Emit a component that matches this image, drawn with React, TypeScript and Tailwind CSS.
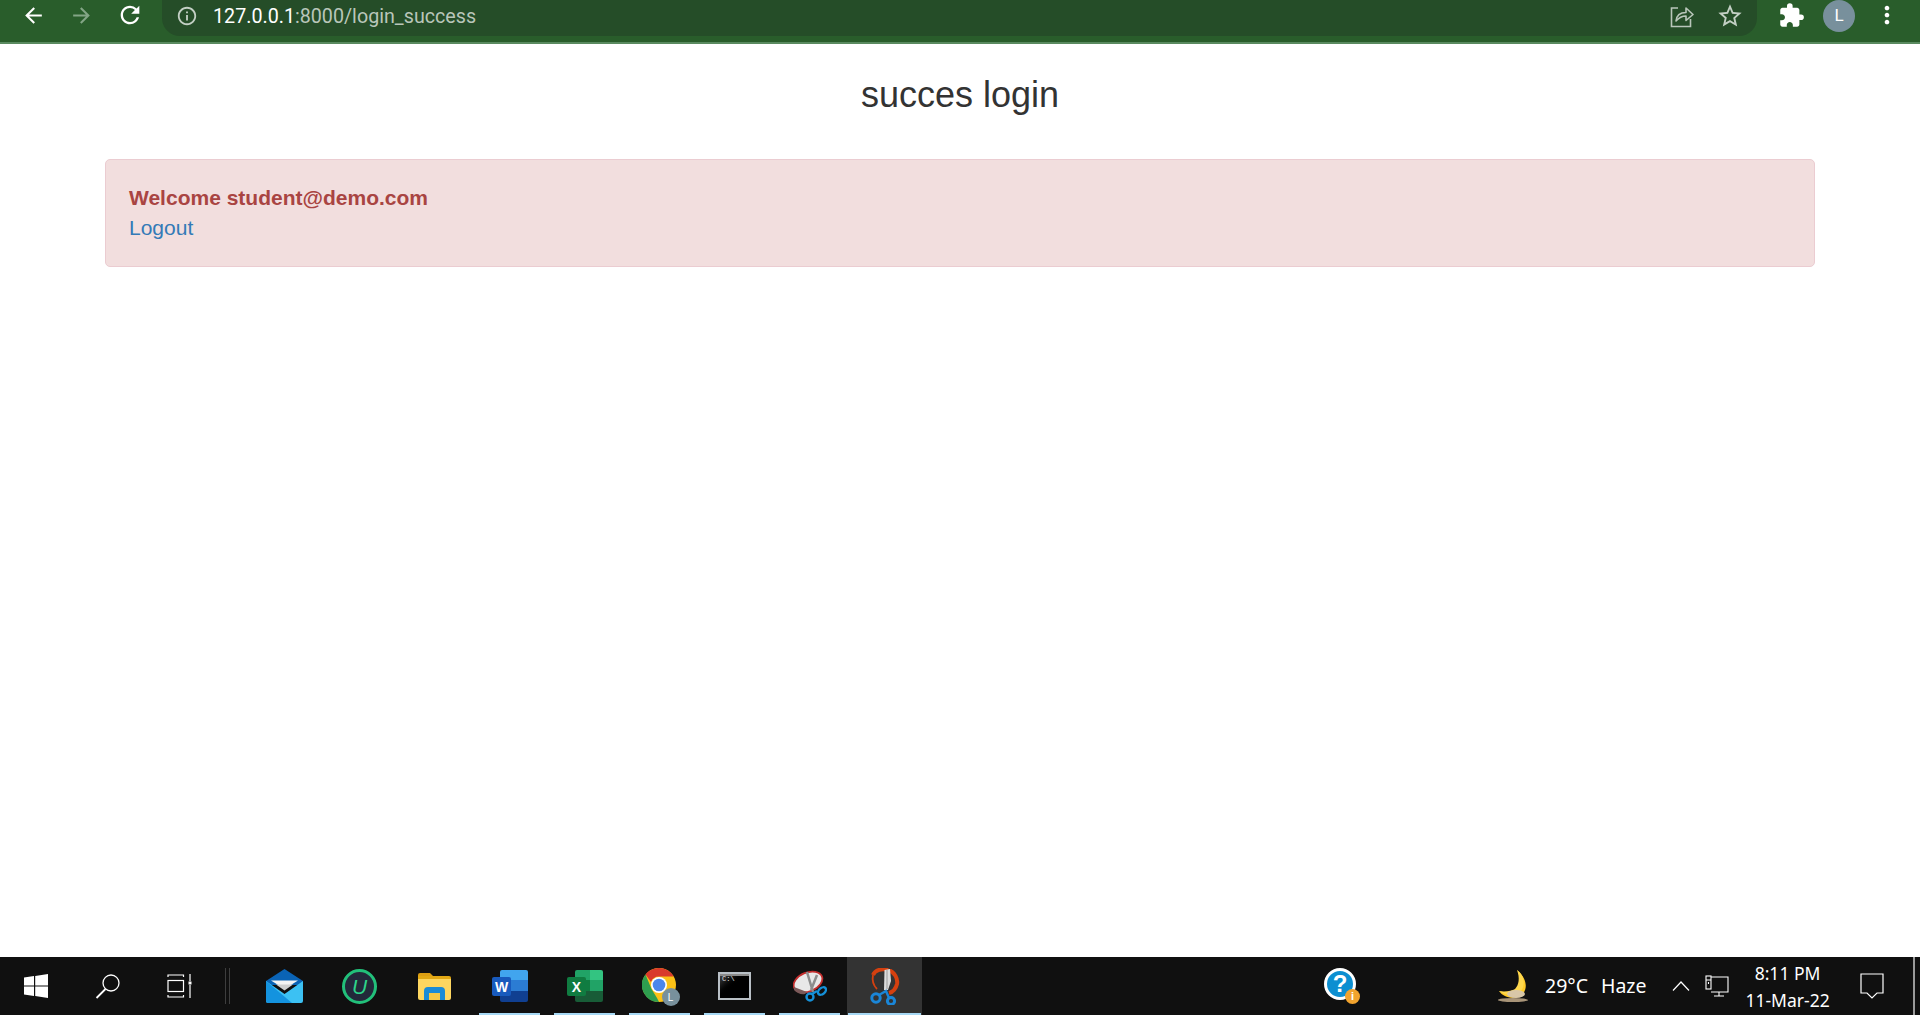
import { MdArrowBack, MdArrowForward, MdExtension, MdInfoOutline, MdMoreVert, MdRefresh, MdStarBorder } from 'react-icons/md'
import type { ReactNode } from 'react'

function ShareIcon() {
  return (
    <svg width="24" height="24" viewBox="0 0 24 24" fill="none" stroke="#b9c6ba" strokeWidth="1.6">
      <path d="M8 4H1.500v18.500h19V15" />
      <path d="M6 17c.5-5 4-8.500 10-8.500V4l7 6.500-7 6V12c-4 0-7 1.500-10 5z" strokeLinejoin="round" />
    </svg>
  )
}

function WindowsLogo() {
  return (
    <svg width="24" height="24" viewBox="0 0 24 24" fill="#fff">
      <path d="M0 3.500l10-1.400v9.300H0zM11.200 1.900L24 0v11.400H11.200zM0 12.600h10v9.300L0 20.500zM11.200 12.600H24V24l-12.800-1.900z" />
    </svg>
  )
}

function SearchIcon() {
  return (
    <svg width="26" height="26" viewBox="0 0 26 26" fill="none" stroke="#fff" strokeWidth="1.300">
      <circle cx="16" cy="10" r="8" />
      <path d="M10.500 16L1.500 25" strokeWidth="1.800" />
    </svg>
  )
}

function TaskViewIcon() {
  return (
    <svg width="26" height="24" viewBox="0 0 26 24" fill="none" stroke="#fff" strokeWidth="1.200">
      <path d="M1 3V1h15.500v2M1 21v2h15.500v-2" />
      <rect x="1" y="6.500" width="15.500" height="11" />
      <path d="M23 0v7M23 11v13" />
      <rect x="21.500" y="7.500" width="3" height="3" fill="#fff" stroke="none" />
    </svg>
  )
}

function MailIcon() {
  return (
    <svg width="37" height="34" viewBox="0 0 37 34">
      <path d="M0 12L18.500 0 37 12v4H0z" fill="#0a63b5" />
      <path d="M5 11.500h27L18.500 20z" fill="#f4f4f4" />
      <path d="M10 15.500h17l-8.500 6z" fill="#cfcfcf" />
      <path d="M0 12l18.500 13L37 12v20a2 2 0 0 1-2 2H2a2 2 0 0 1-2-2z" fill="#3cc1f3" />
      <path d="M0 12l26 22H2a2 2 0 0 1-2-2z" fill="#1493df" />
    </svg>
  )
}

function UIcon() {
  return (
    <div className="flex h-[35px] w-[35px] items-center justify-center rounded-full border-[3px] border-[#22c07a] bg-[#22293a]">
      <span className="font-['Liberation_Sans',sans-serif] text-[21px] italic leading-none text-[#2ed48a]">U</span>
    </div>
  )
}

function FolderIcon() {
  return (
    <svg width="33" height="27" viewBox="0 0 33 27">
      <path d="M0 2a2 2 0 0 1 2-2h10l3 3h-15z" fill="#dd9f12" />
      <path d="M0 3h31a2 2 0 0 1 2 2v2H0z" fill="#e2a814" />
      <path d="M0 6h33v19a2 2 0 0 1-2 2H2a2 2 0 0 1-2-2z" fill="#fdd660" />
      <path d="M6 27v-9a4 4 0 0 1 4-4h13a4 4 0 0 1 4 4v9h-5v-7H11v7z" fill="#1a8bd6" />
      <path d="M11 27v-7h11v7z" fill="#f6c845" />
    </svg>
  )
}

function WordIcon() {
  return (
    <svg width="36" height="32" viewBox="0 0 36 32">
      <path d="M8 2a2 2 0 0 1 2-2h24a2 2 0 0 1 2 2v8H8z" fill="#41a5ee" />
      <path d="M8 10h28v11H8z" fill="#2b7cd3" />
      <path d="M8 21h28v9a2 2 0 0 1-2 2H10a2 2 0 0 1-2-2z" fill="#103f91" />
      <rect y="7" width="19" height="19" rx="2" fill="#185abd" />
      <text x="9.500" y="22" textAnchor="middle" fontSize="14" fontWeight="700" fill="#fff" fontFamily="Liberation Sans, sans-serif">W</text>
    </svg>
  )
}

function ExcelIcon() {
  return (
    <svg width="36" height="32" viewBox="0 0 36 32">
      <path d="M8 2a2 2 0 0 1 2-2h13v10H8z" fill="#21a366" />
      <path d="M23 0h11a2 2 0 0 1 2 2v8H23z" fill="#33c481" />
      <path d="M8 10h15v11H8z" fill="#107c41" />
      <path d="M23 10h13v11H23z" fill="#21a366" />
      <path d="M8 21h28v9a2 2 0 0 1-2 2H10a2 2 0 0 1-2-2z" fill="#185c37" />
      <rect y="7" width="19" height="19" rx="2" fill="#107c41" />
      <text x="9.500" y="22" textAnchor="middle" fontSize="14" fontWeight="700" fill="#fff" fontFamily="Liberation Sans, sans-serif">X</text>
    </svg>
  )
}

function ChromeIcon() {
  return (
    <div className="relative h-[36px] w-[36px]">
      <svg width="34" height="34" viewBox="0 0 34 34">
        <circle cx="17" cy="17" r="17" fill="#fbc116" />
        <path d="M17 0a17 17 0 0 1 14.700 8.500H17A8.500 8.500 0 0 0 9 14L3.500 6.500A17 17 0 0 1 17 0z" fill="#d93a2b" />
        <path d="M3.500 6.500L9.500 21 15 30l2 4A17 17 0 0 1 3.500 6.500z" fill="#2e9e4f" />
        <circle cx="17" cy="17" r="8" fill="#fff" />
        <circle cx="17" cy="17" r="6.300" fill="#4b86ec" />
      </svg>
      <div className="absolute right-[-2px] bottom-[-2px] flex h-[18px] w-[18px] items-center justify-center rounded-full bg-[#78909c] font-['Liberation_Sans',sans-serif] text-[10px] text-white">L</div>
    </div>
  )
}

function CmdIcon() {
  return (
    <div className="flex h-[28px] w-[33px] flex-col border-2 border-[#b9c0c6] bg-gradient-to-br from-[#4a4a4a] via-black to-black">
      <div className="h-[2px] w-full bg-[#8a8a8a]" />
      <span className="pl-[2px] font-['Liberation_Mono',monospace] text-[7px] leading-[7px] text-[#e4e4e4]">C:\</span>
    </div>
  )
}

function SnipIcon() {
  return (
    <svg width="34" height="34" viewBox="0 0 34 34">
      <ellipse cx="15" cy="13" rx="15" ry="9.500" transform="rotate(-22 15 13)" fill="#e8e8e8" stroke="#c22d2d" strokeWidth="1.800" />
      <path d="M1 21c3 3 7 5 11 4l2-2-13-5z" fill="#7b5a5a" />
      <path d="M14 3l6 20M24 6l-6 15" stroke="#8d8d8d" strokeWidth="2.500" />
      <circle cx="17" cy="28" r="3.500" fill="none" stroke="#1590d8" strokeWidth="2.400" />
      <ellipse cx="29" cy="22" rx="3" ry="4.500" transform="rotate(50 29 22)" fill="none" stroke="#1590d8" strokeWidth="2.400" />
      <path d="M19 25l5-3" stroke="#1590d8" strokeWidth="2.400" />
    </svg>
  )
}

function SnipSketchIcon() {
  return (
    <svg width="30" height="37" viewBox="0 0 30 37">
      <path d="M3 7C5 2 12 0 18 2c7 2 10 9 9 14-1 4-4 8-8 9" fill="none" stroke="#d5400f" strokeWidth="4" />
      <path d="M3 7c-1 5 0 10 4 14" fill="none" stroke="#d5400f" strokeWidth="1.800" />
      <path d="M14 22L14.500 2 20 1l1 12-3 9z" fill="#dcdcdc" />
      <path d="M17 2v19" stroke="#9a9a9a" strokeWidth="1" />
      <circle cx="6" cy="30" r="4.200" fill="none" stroke="#1a86d8" strokeWidth="3" />
      <circle cx="21" cy="33" r="3.600" fill="none" stroke="#1a86d8" strokeWidth="3" />
      <path d="M9 27l7-4 3 7" fill="none" stroke="#1a86d8" strokeWidth="2.400" />
    </svg>
  )
}

function HelpIcon() {
  return (
    <div className="relative h-[36px] w-[36px]">
      <div className="flex h-[32px] w-[32px] items-center justify-center rounded-full border-[3px] border-white bg-[#0c8fd1] font-['Liberation_Sans',sans-serif] text-[24px] leading-none font-bold text-white">?</div>
      <div className="absolute right-0 bottom-0 flex h-[15px] w-[15px] items-center justify-center rounded-full bg-[#f1a32e] font-['Liberation_Sans',sans-serif] text-[11px] leading-none font-bold text-white">i</div>
    </div>
  )
}

function MoonIcon() {
  return (
    <svg width="34" height="34" viewBox="0 0 34 34">
      <path d="M20 1c6 7 7 15 2 20-4 3-12 4-20 1 4 6 12 8 19 6 9-3 12-16-1-27z" fill="#ffca28" />
      <path d="M20 1c3 8 2 15-2 19-3 2-10 3-16 2 7 5 16 5 21 1s6-16-3-22z" fill="#ffd84d" />
      <ellipse cx="19" cy="25" rx="9" ry="4" fill="#d9c7a8" />
      <ellipse cx="16" cy="31" rx="15" ry="2" fill="#a89478" />
    </svg>
  )
}

function TrayNetwork() {
  return (
    <svg width="24" height="22" viewBox="0 0 24 22" fill="none" stroke="#fff" strokeWidth="1.100">
      <path d="M1 2h22v15H6" />
      <rect x="1" y="1" width="5" height="13" fill="#101010" />
      <path d="M1 5h5M3.500 7v2M9 21h10M14 17v4" />
    </svg>
  )
}

function TaskButton({ children, line, active }: { children: ReactNode; line?: boolean; active?: boolean }) {
  return (
    <div className={`relative flex h-full w-[75px] items-center justify-center ${active ? 'bg-[#333333]' : ''}`}>
      {children}
      {line && <div className={`absolute bottom-0 h-[2px] bg-[#a6d8f4] ${active ? 'inset-x-[1px]' : 'inset-x-[7px]'}`} />}
    </div>
  )
}

export default function App() {
  return (
    <div className="flex h-screen w-full flex-col overflow-hidden bg-white font-['Liberation_Sans',Arial,sans-serif]">
      {/* chrome toolbar */}
      <div className="flex h-[44px] shrink-0 items-start border-b-2 border-[#5a8a60] bg-[#295d2b]">
        <div className="flex h-[30px] w-[162px] shrink-0 items-center pl-[21px]">
          <MdArrowBack size={25} color="#fff" />
          <MdArrowForward size={25} color="#83a586" className="ml-[23px]" />
          <MdRefresh size={28} color="#fff" className="ml-[22px]" />
        </div>
        <div className="flex h-[36px] flex-1 items-center rounded-br-[18px] rounded-bl-[18px] bg-[#254d28] pr-[12px] pb-[4px] pl-[14px]">
          <MdInfoOutline size={22} color="#c3cfc4" />
          <div className="mt-[1px] ml-[15px] font-['Roboto',sans-serif] text-[19.700px] text-[#b9c6ba]">
            <span className="text-white">127.0.0.1</span>:8000/login_success
          </div>
          <div className="ml-auto flex items-center gap-[22px] pr-[1px]">
            <ShareIcon />
            <MdStarBorder size={28} color="#c3cfc4" />
          </div>
        </div>
        <div className="flex h-[30px] w-[163px] shrink-0 items-center pl-[21px]">
          <MdExtension size={27} color="#fff" />
          <div className="mt-[2px] ml-[18px] flex h-[32px] w-[32px] items-center justify-center rounded-full bg-[#78909c] font-['Roboto',sans-serif] text-[17px] text-white">L</div>
          <MdMoreVert size={28} color="#fff" className="ml-[18px]" />
        </div>
      </div>

      {/* page */}
      <div className="flex-1 px-[105px]">
        <h2 className="mt-[28px] mb-[41px] text-center text-[36px] leading-[46px] font-normal text-[#333333]">succes login</h2>
        <div className="h-[108px] rounded-[5px] border border-[#ebccd1] bg-[#f2dede] px-[23px] py-[23px] text-[21px] leading-[30px]">
          <div className="font-bold text-[#a94442]">Welcome student@demo.com</div>
          <a className="text-[#337ab7]">Logout</a>
        </div>
      </div>

      {/* taskbar */}
      <div className="flex h-[58px] shrink-0 items-center bg-[#101010] text-white">
        <div className="flex h-full w-[72px] items-center justify-center"><WindowsLogo /></div>
        <div className="flex h-full w-[72px] items-center justify-center"><SearchIcon /></div>
        <div className="flex h-full w-[72px] items-center justify-center"><TaskViewIcon /></div>
        <div className="ml-[9px] flex h-[36px] w-[5px] justify-between border-x border-[#3e3e3e]" />
        <div className="ml-[17px] flex h-full">
          <TaskButton><MailIcon /></TaskButton>
          <TaskButton><UIcon /></TaskButton>
          <TaskButton><FolderIcon /></TaskButton>
          <TaskButton line><WordIcon /></TaskButton>
          <TaskButton line><ExcelIcon /></TaskButton>
          <TaskButton line><ChromeIcon /></TaskButton>
          <TaskButton line><CmdIcon /></TaskButton>
          <TaskButton line><SnipIcon /></TaskButton>
          <TaskButton line active><SnipSketchIcon /></TaskButton>
        </div>
        <div className="ml-[402px]"><HelpIcon /></div>
        <div className="ml-[137px]"><MoonIcon /></div>
        <div className="ml-[14px] flex gap-[13px] font-['Noto_Sans',sans-serif] text-[19.500px]">
          <span>29°C</span>
          <span>Haze</span>
        </div>
        <svg width="18" height="10" viewBox="0 0 18 10" fill="none" stroke="#fff" strokeWidth="1.200" className="ml-[25px]">
          <path d="M1 9.500L9 1l8 8.500" />
        </svg>
        <div className="ml-[15px]"><TrayNetwork /></div>
        <div className="mt-[2px] ml-[11px] flex w-[96px] flex-col items-center font-['Noto_Sans',sans-serif] text-[17.500px] leading-[27px]">
          <span>8:11 PM</span>
          <span>11-Mar-22</span>
        </div>
        <svg width="24" height="26" viewBox="0 0 24 26" fill="none" stroke="#fff" strokeWidth="1.200" className="ml-[24px]">
          <path d="M1 1h22v19h-6l-5 5-5-5H1z" />
        </svg>
        <div className="ml-auto mr-[5px] h-full w-[2px] bg-[#9a9a9a]" />
      </div>
    </div>
  )
}
